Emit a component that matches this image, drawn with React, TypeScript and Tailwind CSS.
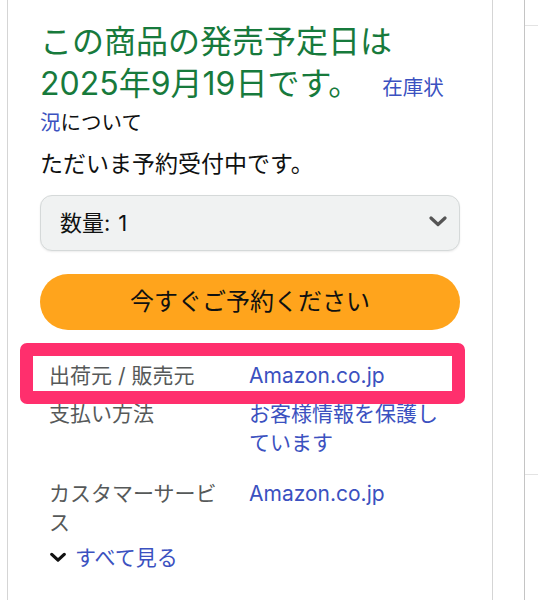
import React from 'react';

// Bold chevron used in the quantity select and the "see all" toggle
const ChevronDown = ({ className, stroke, width = 3 }: { className?: string; stroke: string; width?: number }) => (
  <svg className={className} viewBox="0 0 18 11" fill="none" stroke={stroke} strokeWidth={width} strokeLinecap="round" strokeLinejoin="round">
    <polyline points="2,2 9,8.5 16,2" />
  </svg>
);

const rows = [
  { label: '支払い方法', value: 'お客様情報を保護しています', gap: 'mt-[9px]' },
  { label: 'カスタマーサービス', value: 'Amazon.co.jp', gap: 'mt-[22px]' },
];

export default function App() {
  return (
    <div className="flex h-[600px] w-[538px] overflow-hidden bg-white font-['Inter','Noto_Sans_CJK_JP',sans-serif] text-[#0f1111]">
      <div className="ml-[7px] w-[486px] shrink-0 border-x border-[#d5d5d5] px-[32px] pt-[21px]">
        <div className="text-[20.5px] leading-[35px]">
          <span className="text-[32px] leading-[41px] text-[#177a3c]">この商品の発売予定日は2025年9月19日です。</span>
          <span className="ml-[22px] text-[#3b51c0]">在庫状況</span>
          <span>について</span>
        </div>
        <p className="mt-[8px] text-[23px] leading-[32px]">ただいま予約受付中です。</p>

        <div className="mt-[15px] flex h-[56px] items-center justify-between rounded-[12px] border border-[#d5d9d9] bg-[#f0f2f2] pl-[19px] pr-[12px] shadow-[0_1px_2px_rgba(15,17,17,0.08)]">
          <span className="text-[22px]">
            数量:<span className="ml-[8px]">1</span>
          </span>
          <ChevronDown className="mb-[4px] h-[11px] w-[18px]" stroke="#555" width={3.2} />
        </div>

        <button className="mt-[23px] flex h-[56px] w-full items-center justify-center rounded-full bg-[#ffa41c] text-[24px] text-[#0f1111]">
          今すぐご予約ください
        </button>

        <div className="relative mt-[31px] grid grid-cols-[180px_200px] gap-x-[20px] pl-[9px] text-[21px] leading-[29px]">
          <div className="text-[#565959]">出荷元 / 販売元</div>
          <div className="text-[#3b51c0]">Amazon.co.jp</div>
          <div className="absolute -bottom-[14px] -left-[20px] -right-[5px] -top-[18px] rounded-[7px] border-[13px] border-[#ff2f6d]" />
        </div>

        {rows.map((row) => (
          <div key={row.label} className={`${row.gap} grid grid-cols-[180px_200px] gap-x-[20px] pl-[9px] text-[21px] leading-[29px]`}>
            <div className="text-[#565959]">{row.label}</div>
            <div className="text-[#3b51c0]">{row.value}</div>
          </div>
        ))}

        <div className="mt-[6px] flex items-center gap-[9px] pl-[10px] text-[21px] leading-[29px]">
          <ChevronDown className="h-[11px] w-[16px]" stroke="#111" width={3.6} />
          <span className="text-[#3b51c0]">すべて見る</span>
        </div>
      </div>

      <div className="ml-[31px] flex flex-1 flex-col border-l border-[#c4c4c4]">
        <div className="h-[25px]" />
        <div className="h-[449px] border-t border-[#e3e3e3]" />
        <div className="border-t border-[#e3e3e3]" />
      </div>
    </div>
  );
}
